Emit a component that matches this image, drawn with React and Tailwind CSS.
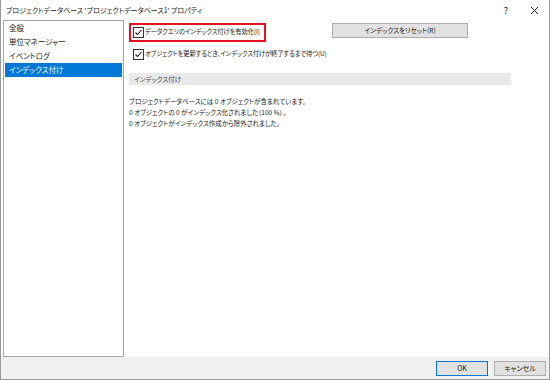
import React from 'react';

const CheckBox = () => (
  <svg width="11" height="11" viewBox="0 0 11 11" className="shrink-0">
    <rect x="0.5" y="0.5" width="10" height="10" fill="#fff" stroke="#333" />
    <path d="M2.5 5.5 L4.5 7.5 L8.5 3" fill="none" stroke="#222" strokeWidth="1.1" />
  </svg>
);

const navItems = ['全般', '単位マネージャー', 'イベントログ', 'インデックス付け'];

const App = () => {
  const selected = 3;

  return (
    <div className="w-[550px] h-[380px] bg-white flex flex-col border-x border-b border-[#9a9a9a] text-[#1a1a1a] font-['Noto_Sans_CJK_JP',sans-serif] [font-feature-settings:'palt'] overflow-hidden">
      {/* title bar */}
      <div className="h-[20px] flex items-center pl-[5px] shrink-0">
        <span className="text-[7px] leading-none">プロジェクトデータベース 'プロジェクトデータベース1' プロパティ</span>
        <span className="ml-auto text-[9px] leading-none mr-[22px]">?</span>
        <svg width="9" height="9" viewBox="0 0 9 9" className="mr-[10px]">
          <path d="M1 1 L8 8 M8 1 L1 8" stroke="#222" strokeWidth="1" />
        </svg>
      </div>

      {/* body */}
      <div className="flex flex-1 min-h-0">
        <div className="ml-[2px] w-[121px] border border-[#a6a6a6] bg-white px-[1px] shrink-0">
          {navItems.map((item, i) => (
            <div
              key={item}
              className={
                i === selected
                  ? 'h-[14px] flex items-center pl-[4px] text-[7.5px] bg-[#0078d7] text-white'
                  : 'h-[14px] flex items-center pl-[4px] text-[7.5px]'
              }
            >
              {item}
            </div>
          ))}
        </div>

        <div className="flex-1 pl-[5px] pt-[3px]">
          <div className="flex items-start">
            <div className="w-[137px] h-[19px] border-2 border-[#e81123] flex items-center pl-[2px] gap-[1px] whitespace-nowrap">
              <CheckBox />
              <span className="text-[6.3px] leading-none tracking-[-0.1px]">データクエリのインデックス付けを有効化(I)</span>
            </div>
            <button className="ml-[66px] w-[136px] h-[15px] bg-[#e1e1e1] border border-[#adadad] text-[6.6px] leading-none">
              インデックスをリセット(R)
            </button>
          </div>

          <div className="flex items-center gap-[1px] pl-[4px] mt-[7px] whitespace-nowrap">
            <CheckBox />
            <span className="text-[6.3px] leading-none tracking-[-0.1px]">オブジェクトを更新するとき、インデックス付けが終了するまで待つ(U)</span>
          </div>

          <div className="mt-[13px] mr-[38px] h-[12px] bg-[#e9e9e9] flex items-center pl-[5px]">
            <span className="text-[6.5px] leading-none text-[#444]">インデックス付け</span>
          </div>

          <div className="mt-[13px] flex flex-col gap-[4px] text-[6.5px] leading-[7px]">
            <span>プロジェクトデータベースには 0 オブジェクトが含まれています。</span>
            <span>0 オブジェクトの 0 がインデックス化されました（100 %）。</span>
            <span>0 オブジェクトがインデックス作成から除外されました。</span>
          </div>
        </div>
      </div>

      {/* footer */}
      <div className="h-[22px] bg-[#f0f0f0] flex items-center justify-end gap-[6px] pr-[3px] shrink-0">
        <button className="w-[52px] h-[15px] bg-[#e1e1e1] border border-[#0078d7] text-[7px] leading-none">OK</button>
        <button className="w-[52px] h-[15px] bg-[#e1e1e1] border border-[#adadad] text-[7px] leading-none">キャンセル</button>
      </div>
    </div>
  );
};

export default App;
